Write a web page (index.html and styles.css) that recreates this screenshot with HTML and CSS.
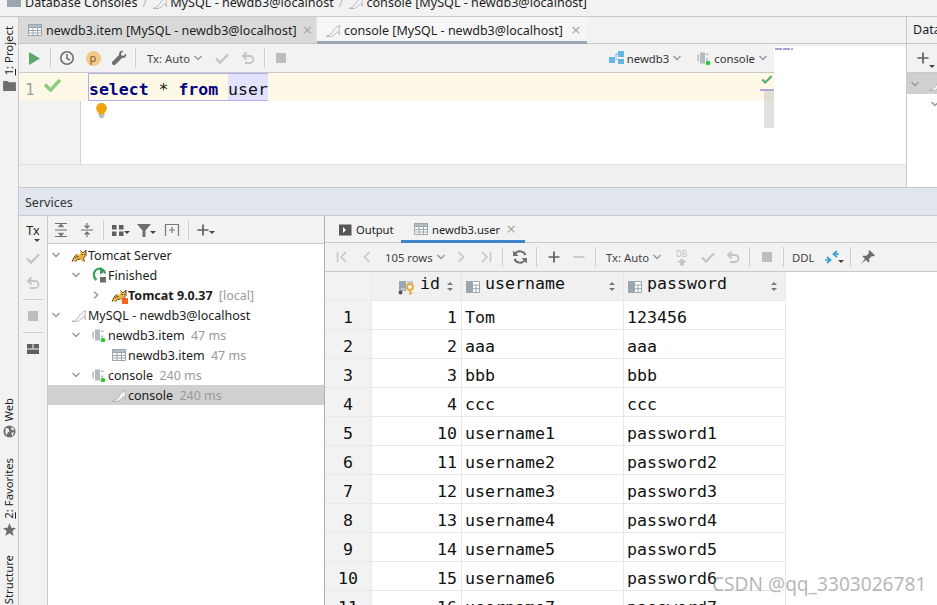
FILE: index.html
```html
<!DOCTYPE html>
<html lang="en">
<head>
<meta charset="utf-8">
<title>Database Consoles</title>
<link rel="stylesheet" href="styles.css">
</head>
<body>
<svg class="defs" width="0" height="0">
  <symbol id="dolphin" viewBox="0 0 16 16"><path d="M1 14.500C4 13.500 6.500 12 8 9.500 9.500 6.500 11.500 4.500 15 3.500L14 6.500 14.500 12.500 12.500 9.500C11 11.500 9 13.500 6 14.500Z" fill="#f6f6f6" stroke="#ababab" stroke-width=".8"/></symbol>
  <symbol id="table" viewBox="0 0 14 14"><path d="M.5 1.500h13v11H.5z" fill="#fff" stroke="#9aa7b0"/><path d="M.5 1.500h13v3H.5z" fill="#b3bcc3" stroke="#9aa7b0"/><path d="M.5 7.500h13M.5 10h13M5 4.500v8M9.500 4.500v8" stroke="#9aa7b0" fill="none"/></symbol>
  <symbol id="col" viewBox="0 0 14 14"><path d="M0 1h6v12H0z" fill="#9aa7b0"/><path d="M6.500 1.500h7v11h-7zM6.500 5h7M6.500 8.700h7M10 5v7.500" fill="#fff" stroke="#9aa7b0"/></symbol>
  <symbol id="chev" viewBox="0 0 10 10"><path d="M1.500 3l3.500 3.500L8.500 3" fill="none" stroke="#9a9a9a" stroke-width="1.500"/></symbol>
  <symbol id="chevr" viewBox="0 0 10 10"><path d="M3 1.500L6.500 5 3 8.500" fill="none" stroke="#9a9a9a" stroke-width="1.500"/></symbol>
  <symbol id="check" viewBox="0 0 16 16"><path d="M2 8.500l4 4 8-8" fill="none" stroke="#c4c4c4" stroke-width="2.400"/></symbol>
  <symbol id="undo" viewBox="0 0 16 16"><path d="M3.500 6H10a3.500 3.500 0 0 1 0 7H5M6.500 2.500L3 6l3.500 3.500" fill="none" stroke="#c4c4c4" stroke-width="1.800"/></symbol>
  <symbol id="stop" viewBox="0 0 16 16"><path d="M3 3h10v10H3z" fill="#bdbdbd"/></symbol>
  <symbol id="conn" viewBox="0 0 16 16"><path d="M1.500 4.500h1.500v7H1.500zM4 2.500h5v11H4z" fill="#b4bbc0"/><path d="M10 3.500h2.500v1.500H10zM10 8.500h2v2h-2z" fill="#b4bbc0"/><circle cx="12" cy="13" r="2.300" fill="#2fc62f"/></symbol>
  <symbol id="cat" viewBox="0 0 16 16"><path d="M1 14.500C2.500 12 3 9 6 7.500L9 7.500 9.500 3.500 11.500 5.500 13.500 5 15 3 15 8.500 12.500 11 13.500 14.500H11L9.500 12 6.500 12.500 4.500 14.500Z" fill="#edb53a"/><path d="M1 14.500C2.500 12 3 9 6 7.500M9.500 3.500L11.500 5.500 13.500 5 15 3 15 8.500 12.500 11 13.500 14.500M9.500 12L6.500 12.500 4.500 14.500" fill="none" stroke="#4f4a3e" stroke-width="1"/><path d="M10.500 7.500h1.500M13 7.500h1M4.500 10.500L7.500 9.500" stroke="#4f4a3e" stroke-width="1"/></symbol>
  <symbol id="plus" viewBox="0 0 16 16"><path d="M8 2.500v11M2.500 8h11" stroke="#5f5f5f" stroke-width="1.700"/></symbol>
  <symbol id="caret" viewBox="0 0 6 4"><path d="M0 0h6L3 3z" fill="#444"/></symbol>
</svg>

<div class="app">
  <div class="crumbs">
    <span class="crumb-box"></span><span class="crumb">Database Consoles</span><span class="slash">/</span>
    <svg class="i16"><use href="#dolphin"/></svg><span class="crumb">MySQL - newdb3@localhost</span><span class="slash">/</span>
    <svg class="i16"><use href="#dolphin"/></svg><span class="crumb">console [MySQL - newdb3@localhost]</span>
  </div>

  <div class="main">
    <div class="stripe">
      <span class="vt vt-project"><u>1</u>: Project</span>
      <svg class="stripe-ico folder" viewBox="0 0 14 12"><path d="M0 1h5l1.500 1.500H14V12H0z" fill="#6e6e6e"/></svg>
      <span class="vt vt-web">Web</span>
      <svg class="stripe-ico globe" viewBox="0 0 14 14"><circle cx="7" cy="7" r="6.500" fill="#6e6e6e"/><path d="M3 3l3 1 1 3-2 1-1 3-1.500-3zM9 2l3 2-1 2-2-1zM9 8l3 0-2 4z" fill="#f2f2f2"/></svg>
      <span class="vt vt-fav"><u>2</u>: Favorites</span>
      <svg class="stripe-ico star" viewBox="0 0 14 14"><path d="M7 0l2 5 5 .3-3.900 3.200L11.400 14 7 11l-4.400 3 1.300-5.500L0 5.300 5 5z" fill="#6e6e6e"/></svg>
      <span class="vt vt-struct">Structure</span>
    </div>

    <div class="center">
      <div class="upper">
        <div class="upper-main">
          <div class="tabs">
            <div class="tab tab-off"><svg class="i14"><use href="#table"/></svg><span>newdb3.item [MySQL - newdb3@localhost]</span><span class="x">×</span></div>
            <div class="tab tab-on"><svg class="i16"><use href="#dolphin"/></svg><span>console [MySQL - newdb3@localhost]</span><span class="x">×</span></div>
          </div>
          <div class="work">
            <div class="work-left">
              <div class="ed-bar">
                <span class="eb"><svg class="i16" viewBox="0 0 16 16"><path d="M3 2l11 6.500L3 15z" fill="#59a869"/></svg></span>
                <span class="sep"></span>
                <span class="eb"><svg class="i16" viewBox="0 0 16 16"><circle cx="8" cy="8" r="6.200" fill="none" stroke="#6e6e6e" stroke-width="1.600"/><path d="M8 4v4.500l3 1.500" fill="none" stroke="#6e6e6e" stroke-width="1.500"/></svg></span>
                <span class="eb"><span class="pbadge">p</span></span>
                <span class="eb"><svg class="i16" viewBox="0 0 16 16"><path d="M15 3.500l-2.500 2.500-2-.5-.5-2L12.500 1C10 .2 7.500 2 8 5L1.500 11.500a2 2 0 0 0 3 3L11 8c3 .5 4.800-2 4-4.500z" fill="#6e6e6e"/></svg></span>
                <span class="sep"></span>
                <span class="lbl lbl-tx1">Tx: Auto<svg class="chev"><use href="#chev"/></svg></span>
                <span class="eb"><svg class="i16"><use href="#check"/></svg></span>
                <span class="eb"><svg class="i16"><use href="#undo"/></svg></span>
                <span class="sep"></span>
                <span class="eb"><svg class="i16"><use href="#stop"/></svg></span>
                <span class="ed-right">
                  <svg class="i16" viewBox="0 0 16 16"><path d="M0 7h6v6H0zM9 1h6v6H9zM9 9h6v5H9z" fill="#62b8e0"/><path d="M6 9h3M9 4H7v3" stroke="#62b8e0" fill="none"/></svg>
                  <span class="ctx">newdb3</span><svg class="chev"><use href="#chev"/></svg>
                  <svg class="i16 ctx-gap"><use href="#conn"/></svg>
                  <span class="ctx">console</span><svg class="chev"><use href="#chev"/></svg>
                </span>
              </div>
              <div class="editor">
                <div class="line">
                  <div class="line-gut"><span class="lnum">1</span><svg class="okmark" viewBox="0 0 20 16"><path d="M2 8l6 6L18 3" fill="none" stroke="#8ccb7e" stroke-width="3.600"/></svg></div>
                  <div class="code"><span class="kw">select</span> * <span class="kw">from</span> <span class="ident">user</span></div>
                </div>
                <div class="rest">
                  <div class="rest-gut"></div>
                  <div class="rest-body"><svg class="bulb" viewBox="0 0 11 15"><path d="M5.500 0a5.200 5.200 0 0 1 3 9.500V11h-6V9.500A5.200 5.200 0 0 1 5.500 0z" fill="#f0a30a"/><path d="M2.500 12h6M3.500 14h4" stroke="#777" stroke-width="1"/></svg></div>
                </div>
                <svg class="mini-ok" viewBox="0 0 14 12"><path d="M1.500 6l3.500 3.500L12.500 2" fill="none" stroke="#59a869" stroke-width="2.400"/></svg>
                <span class="mark-line"></span>
                <span class="thumb"></span>
              </div>
            </div>
            <div class="work-blank"><span class="dash"></span></div>
          </div>
          <div class="strip"></div>
        </div>
        <div class="right-panel">
          <div class="rp-tab">Data</div>
          <div class="rp-bar"><svg class="i16"><use href="#plus"/></svg><svg class="caret"><use href="#caret"/></svg></div>
          <div class="rp-sel"><svg class="chev"><use href="#chev"/></svg><svg class="i16"><use href="#dolphin"/></svg></div>
          <div class="rp-row"><svg class="chev"><use href="#chev"/></svg></div>
        </div>
      </div>

      <div class="svc-head">Services</div>

      <div class="bottom">
        <div class="tx-col">
          <span class="tx">Tx<svg class="caret"><use href="#caret"/></svg></span>
          <svg class="i16"><use href="#check"/></svg>
          <svg class="i16"><use href="#undo"/></svg>
          <span class="hsep"></span>
          <svg class="i16"><use href="#stop"/></svg>
          <span class="hsep"></span>
          <svg class="i14" viewBox="0 0 14 14"><path d="M1 2h5.500v4.500H1zM7.500 2H13v4.500H7.500zM1 7.500h12V12H1z" fill="#5f5f5f"/></svg>
        </div>

        <div class="tree-pane">
          <div class="tree-bar">
            <span class="tb"><svg class="i16" viewBox="0 0 16 16"><path d="M2 1.500h12M2 14.500h12M2 8h12M8 2.500v3M5.500 5L8 2.500 10.500 5M8 13.500v-3M5.500 11L8 13.500 10.500 11" stroke="#6e6e6e" fill="none" stroke-width="1.200"/></svg></span>
            <span class="tb"><svg class="i16" viewBox="0 0 16 16"><path d="M2 8h12M8 1v5M5.500 3.500L8 6l2.500-2.500M8 15v-5M5.500 12.500L8 10l2.500 2.500" stroke="#6e6e6e" fill="none" stroke-width="1.200"/></svg></span>
            <span class="sep"></span>
            <span class="tb"><svg class="i16" viewBox="0 0 16 16"><path d="M2 3h4.500v4.500H2zM9 3h4.500v4.500H9zM2 9.500h4.500V14H2zM9 9.500h4.500V14H9z" fill="#5f5f5f"/></svg><svg class="caret"><use href="#caret"/></svg></span>
            <span class="tb"><svg class="i16" viewBox="0 0 16 16"><path d="M1 2h14L9.500 8.500V15h-3V8.500z" fill="#6e6e6e"/></svg><svg class="caret"><use href="#caret"/></svg></span>
            <span class="tb"><svg class="i16" viewBox="0 0 16 16"><path d="M1.500 14V2.500h13V14M8 5v6M5 8h6" fill="none" stroke="#777" stroke-width="1.200"/></svg></span>
            <span class="sep"></span>
            <span class="tb"><svg class="i16"><use href="#plus"/></svg><svg class="caret"><use href="#caret"/></svg></span>
          </div>
          <div class="tree">
            <div class="node l0"><svg class="chev tc"><use href="#chev"/></svg><svg class="i16"><use href="#cat"/></svg><span class="nt">Tomcat Server</span></div>
            <div class="node l1"><svg class="chev tc"><use href="#chev"/></svg><svg class="i16" viewBox="0 0 16 16"><path d="M14 6.500A5.500 5.500 0 0 0 3 8c0 2.500 1 4 2.500 5" fill="none" stroke="#3c9a5f" stroke-width="2.200"/><path d="M9 .5l5.500 3.500L9 7.500z" fill="#3c9a5f"/><path d="M9 10h6v5.500H9z" fill="#6e6e6e"/></svg><span class="nt">Finished</span></div>
            <div class="node l2"><svg class="chev tc"><use href="#chevr"/></svg><span class="ico-wrap"><svg class="i16"><use href="#cat"/></svg><span class="badge-run"></span></span><span class="nt"><b>Tomcat 9.0.37</b> <span class="dim">[local]</span></span></div>
            <div class="node l0"><svg class="chev tc"><use href="#chev"/></svg><svg class="i16"><use href="#dolphin"/></svg><span class="nt">MySQL - newdb3@localhost</span></div>
            <div class="node l1"><svg class="chev tc"><use href="#chev"/></svg><svg class="i16"><use href="#conn"/></svg><span class="nt">newdb3.item <span class="dim">47 ms</span></span></div>
            <div class="node l2"><span class="tc"></span><svg class="i16 tbl-ico"><use href="#table"/></svg><span class="nt">newdb3.item <span class="dim">47 ms</span></span></div>
            <div class="node l1"><svg class="chev tc"><use href="#chev"/></svg><svg class="i16"><use href="#conn"/></svg><span class="nt">console <span class="dim">240 ms</span></span></div>
            <div class="node l2 sel"><span class="tc"></span><svg class="i16"><use href="#dolphin"/></svg><span class="nt">console <span class="dim">240 ms</span></span></div>
          </div>
        </div>

        <div class="results">
          <div class="res-tabs">
            <div class="rt"><svg class="i14" viewBox="0 0 14 14"><path d="M1 1.500h12.500v11H1z" fill="#555"/><path d="M5 4l3 3-3 3z" fill="#fff"/></svg><span>Output</span></div>
            <div class="rt rt-on"><svg class="i14"><use href="#table"/></svg><span>newdb3.user</span><span class="x">×</span></div>
          </div>
          <div class="res-bar">
            <span class="tb25"><svg class="i16" viewBox="0 0 16 16"><path d="M3.500 3v10M12 3L7 8l5 5" fill="none" stroke="#c4c4c4" stroke-width="1.500"/></svg></span>
            <span class="tb25"><svg class="i16" viewBox="0 0 16 16"><path d="M10.500 3l-5 5 5 5" fill="none" stroke="#c4c4c4" stroke-width="1.500"/></svg></span>
            <span class="lbl lbl-rows">105 rows<svg class="chev"><use href="#chev"/></svg></span>
            <span class="tb25"><svg class="i16" viewBox="0 0 16 16"><path d="M5.500 3l5 5-5 5" fill="none" stroke="#c4c4c4" stroke-width="1.500"/></svg></span>
            <span class="tb25"><svg class="i16" viewBox="0 0 16 16"><path d="M12.500 3v10M4 3l5 5-5 5" fill="none" stroke="#c4c4c4" stroke-width="1.500"/></svg></span>
            <span class="sep"></span>
            <span class="tb25"><svg class="i16" viewBox="0 0 16 16"><path d="M13.500 6A6 6 0 0 0 3 5M2.500 10A6 6 0 0 0 13 11" fill="none" stroke="#6e6e6e" stroke-width="2"/><path d="M1 1.500V7h5.500zM15 14.500V9H9.500z" fill="#6e6e6e"/></svg></span>
            <span class="sep"></span>
            <span class="tb25"><svg class="i16"><use href="#plus"/></svg></span>
            <span class="tb25"><svg class="i16" viewBox="0 0 16 16"><path d="M2.500 8h11" stroke="#c4c4c4" stroke-width="1.700"/></svg></span>
            <span class="sep"></span>
            <span class="lbl lbl-tx2">Tx: Auto<svg class="chev"><use href="#chev"/></svg></span>
            <span class="tb25"><span class="dbup"><span class="dbt">DB</span><svg class="dba" viewBox="0 0 12 7"><path d="M6 0l5 4H8v3H4V4H1z" fill="#c4c4c4"/></svg></span></span>
            <span class="tb25 m1"><svg class="i16"><use href="#check"/></svg></span>
            <span class="tb25"><svg class="i16"><use href="#undo"/></svg></span>
            <span class="sep"></span>
            <span class="tb25"><svg class="i16"><use href="#stop"/></svg></span>
            <span class="sep"></span>
            <span class="lbl lbl-ddl">DDL</span>
            <span class="tb25"><svg class="i16" viewBox="0 0 16 16"><path d="M15 5H10.500M13 2L9.500 5 13 8M1 11h4.500M3 8l3.500 3L3 14" fill="none" stroke="#389fd6" stroke-width="1.700"/></svg><svg class="caret"><use href="#caret"/></svg></span>
            <span class="sep"></span>
            <span class="tb25"><svg class="i16" viewBox="0 0 16 16"><path d="M9.500 1L15 6.500l-1.500 1L12 7 9 10l.5 2.500-1 1L6 11l-5 4 4-5-2.500-2.500 1-1L6 7l3-3-.5-1.500z" fill="#6e6e6e"/></svg></span>
          </div>
          <div class="grid">
            <div class="row head">
              <div class="c n"></div>
              <div class="c h h-id"><svg class="pk" viewBox="0 0 17 16"><path d="M1 2h7v10H1z" fill="#9aa7b0"/><path d="M3 9h4v2H3zM9 2h6v3H9z" fill="#c3cbd0"/><circle cx="2.500" cy="13.500" r="2" fill="#555"/><circle cx="12" cy="8" r="3" fill="none" stroke="#e9a83a" stroke-width="1.800"/><path d="M12 11v5M12 14h2.500" stroke="#e9a83a" stroke-width="1.500"/></svg><span class="ht">id</span><span class="sort"></span></div>
              <div class="c h"><svg class="i14"><use href="#col"/></svg><span class="ht">username</span><span class="sort"></span></div>
              <div class="c h"><svg class="i14"><use href="#col"/></svg><span class="ht">password</span><span class="sort"></span></div>
            </div>
            <div class="row"><div class="c n">1</div><div class="c num">1</div><div class="c">Tom</div><div class="c">123456</div></div>
            <div class="row"><div class="c n">2</div><div class="c num">2</div><div class="c">aaa</div><div class="c">aaa</div></div>
            <div class="row"><div class="c n">3</div><div class="c num">3</div><div class="c">bbb</div><div class="c">bbb</div></div>
            <div class="row"><div class="c n">4</div><div class="c num">4</div><div class="c">ccc</div><div class="c">ccc</div></div>
            <div class="row"><div class="c n">5</div><div class="c num">10</div><div class="c">username1</div><div class="c">password1</div></div>
            <div class="row"><div class="c n">6</div><div class="c num">11</div><div class="c">username2</div><div class="c">password2</div></div>
            <div class="row"><div class="c n">7</div><div class="c num">12</div><div class="c">username3</div><div class="c">password3</div></div>
            <div class="row"><div class="c n">8</div><div class="c num">13</div><div class="c">username4</div><div class="c">password4</div></div>
            <div class="row"><div class="c n">9</div><div class="c num">14</div><div class="c">username5</div><div class="c">password5</div></div>
            <div class="row"><div class="c n">10</div><div class="c num">15</div><div class="c">username6</div><div class="c">password6</div></div>
            <div class="row"><div class="c n">11</div><div class="c num">16</div><div class="c">username7</div><div class="c">password7</div></div>
          </div>
        </div>
      </div>
    </div>
  </div>
  <div class="watermark">CSDN @qq_3303026781</div>
</div>
</body>
</html>
```

FILE: styles.css
```css
* { box-sizing: border-box; }
html, body { margin: 0; height: 605px; overflow: hidden; }
body { font-family: "Noto Sans", "Open Sans", sans-serif; font-size: 12.5px; color: #1f1f1f; background: #f2f2f2; }
.defs { position: absolute; }
svg { display: block; flex: none; }
.i16 { width: 16px; height: 16px; }
.i14 { width: 14px; height: 14px; }
.chev { width: 10px; height: 10px; }
.caret { width: 6px; height: 4px; align-self: flex-end; margin-left: -2px; margin-bottom: 3px; }

.app { position: relative; width: 937px; height: 605px; display: flex; flex-direction: column; overflow: hidden; }

/* breadcrumb */
.crumbs { height: 17px; flex: none; border-bottom: 1px solid #c9c9c9; display: flex; align-items: flex-start; padding-left: 7px; overflow: hidden; font-size: 12.600px; }
.crumbs > * { margin-top: -6px; }
.crumbs .i16 { margin-top: -6px; }
.crumb-box { width: 14px; height: 13px; background: #9aa7b0; margin-right: 2px; }
.crumb { line-height: 18px; white-space: nowrap; margin-left: 2px; }
.slash { color: #bbb; line-height: 18px; margin: -6px 5px 0 5px; }

/* left stripe */
.main { flex: 1; display: flex; min-height: 0; }
.stripe { width: 19px; flex: none; border-right: 1px solid #c9c9c9; display: flex; flex-direction: column; align-items: center; padding-top: 9px; background: #f2f2f2; }
.vt { writing-mode: vertical-rl; transform: rotate(180deg); font-size: 11.300px; line-height: 18px; white-space: nowrap; color: #222; }
.stripe-ico { flex: none; }
.folder { width: 13px; height: 11px; margin-top: 5px; }
.vt-web { margin-top: auto; }
.globe { width: 13px; height: 13px; margin-top: 4px; }
.vt-fav { margin-top: 20px; }
.star { width: 13px; height: 13px; margin-top: 4px; }
.vt-struct { margin-top: 19px; margin-bottom: 1px; }

/* upper area */
.center { flex: 1; min-width: 0; display: flex; flex-direction: column; }
.upper { height: 171px; flex: none; display: flex; border-bottom: 1px solid #c9c9c9; }
.upper-main { width: 887px; flex: none; display: flex; flex-direction: column; }
.tabs { height: 27px; flex: none; display: flex; background: #f2f2f2; border-bottom: 1px solid #c9c9c9; }
.tab { display: flex; align-items: center; height: 27px; white-space: nowrap; }
.tab-off { width: 298px; background: #d9d9d9; padding-left: 9px; gap: 4px; height: 26px; border-right: 1px solid #e5e5e5; }
.tab-off .x { margin-left: 2px; }
.tab-on { width: 270px; background: #f6f6f6; padding-left: 8px; gap: 3px; border-bottom: 3px solid #9aa5b5; padding-top: 2px; }
.x { color: #aaa; font-size: 17px; line-height: 14px; margin-left: 5px; }
.work { height: 120px; flex: none; display: flex; }
.work-left { width: 755px; flex: none; display: flex; flex-direction: column; }
.work-blank { flex: 1; background: #fff; margin-top: 3px; position: relative; }
.dash { position: absolute; left: 1px; top: 1px; width: 18px; height: 2px; background: repeating-linear-gradient(90deg, #a9a3d6 0 7px, #fff 7px 8px); }
.ed-bar { height: 29px; flex: none; display: flex; align-items: center; padding-left: 2px; background: #f2f2f2; border-bottom: 1px solid #c9c9c9; }
.eb { width: 26px; height: 20px; display: flex; align-items: center; justify-content: center; flex: none; }
.sep { width: 1px; height: 20px; background: #cfcfcf; margin: 0 4px; flex: none; }
.ed-bar .sep { margin: 0 3px; }
.pbadge { width: 15px; height: 15px; border-radius: 50%; background: #f4c987; color: #7a5a2a; font-size: 11px; line-height: 14px; text-align: center; }
.lbl { display: flex; align-items: center; white-space: nowrap; flex: none; font-size: 11.300px; color: #444; }
.lbl .chev { margin-left: 3px; }
.lbl-tx1 { width: 70px; padding-left: 8px; }
.ed-right { margin-left: auto; display: flex; align-items: center; padding-right: 6px; }
.ctx { margin-left: 2px; font-size: 11.300px; color: #333; }
.ed-right .chev { margin-left: 3px; }
.ed-right .ctx-gap { margin-left: 14px; }
.editor { flex: 1; position: relative; display: flex; flex-direction: column; background: #fff; }
.line { height: 28px; flex: none; display: flex; background: #fef9e6; }
.line-gut { width: 62px; flex: none; display: flex; align-items: center; padding-left: 6px; }
.lnum { font-family: "DejaVu Sans Mono", monospace; font-size: 16px; color: #a0a0a0; width: 18px; margin-top: 4px; }
.okmark { width: 19px; height: 15px; margin-top: -5px; }
.code { margin-left: 7px; height: 28px; width: 180px; border: 1px solid #b4aaf0; font-family: "DejaVu Sans Mono", monospace; font-size: 16.500px; line-height: 32px; white-space: pre; color: #111; }
.kw { font-weight: bold; color: #000080; }
.ident { display: inline-block; height: 26px; vertical-align: top; background: #e2e2ff; }
.rest { flex: 1; display: flex; }
.rest-gut { width: 62px; flex: none; background: #f2f2f2; border-right: 1px solid #d4d4d4; }
.rest-body { flex: 1; background: #fff; }
.bulb { width: 11px; height: 15px; margin: 2px 0 0 15px; }
.mini-ok { position: absolute; left: 742px; top: 1px; width: 12px; height: 11px; }
.mark-line { position: absolute; left: 741px; top: 16px; width: 14px; height: 2px; background: #b3a4e6; }
.thumb { position: absolute; left: 745px; top: 18px; width: 10px; height: 37px; background: rgba(180,180,180,.4); }
.strip { flex: 1; background: #f0f0f0; border-top: 1px solid #e0e0e0; }
.right-panel { flex: 1; border-left: 1px solid #c9c9c9; display: flex; flex-direction: column; background: #fff; min-width: 0; overflow: hidden; }
.rp-tab { height: 27px; flex: none; background: #f2f2f2; border-bottom: 1px solid #c9c9c9; padding-left: 6px; line-height: 26px; white-space: nowrap; }
.rp-bar { height: 29px; flex: none; background: #f2f2f2; border-bottom: 1px solid #c9c9c9; display: flex; align-items: center; padding-left: 8px; }
.rp-sel { height: 21px; flex: none; background: #d0d0d0; display: flex; align-items: center; padding-left: 3px; gap: 8px; }
.rp-row { height: 20px; display: flex; align-items: center; padding-left: 23px; }

/* services */
.svc-head { height: 28px; flex: none; background: #e1e5ed; border-bottom: 1px solid #c9c9c9; padding-left: 6px; line-height: 29px; font-size: 12.500px; color: #333; }
.bottom { flex: 1; display: flex; min-height: 0; }
.tx-col { width: 29px; flex: none; border-right: 1px solid #c9c9c9; display: flex; flex-direction: column; align-items: center; padding-top: 7px; gap: 9px; background: #f2f2f2; }
.tx-col .i14 { margin-top: 1px; }
.tx { display: flex; font-size: 12.500px; line-height: 16px; height: 17px; margin-bottom: 1px; }
.tx .caret { margin-left: -6px; margin-bottom: -3px; }
.hsep { width: 20px; height: 1px; background: #cfcfcf; margin-top: -1px; margin-bottom: -1px; }
.tree-pane { width: 277px; flex: none; border-right: 1px solid #b0b0b0; display: flex; flex-direction: column; background: #fff; }
.tree-bar { height: 28px; flex: none; display: flex; align-items: center; padding-left: 0; background: #f2f2f2; border-bottom: 1px solid #c9c9c9; }
.tree-bar .sep { margin: 0 3px 0 3px; }
.tb { width: 26px; display: flex; align-items: center; justify-content: center; flex: none; }
.tree { flex: 1; padding-top: 1px; }
.node { height: 20px; display: flex; align-items: center; white-space: nowrap; color: #1c1c1c; }
.tc { width: 10px; height: 10px; margin-right: 10px; margin-left: 3px; flex: none; }
.l1 { padding-left: 20px; }
.l2 { padding-left: 40px; }
.l0 { padding-left: 0; }
.node .nt { margin-left: 1px; }
.sel { background: #d0d0d0; }
.dim { color: #9a9a9a; margin-left: 3px; }
.ico-wrap { position: relative; display: block; }
.badge-run { position: absolute; right: -1px; bottom: -1px; width: 6px; height: 6px; background: #f26522; }
.tbl-ico { padding: 1px; }

/* results */
.results { flex: 1; min-width: 0; display: flex; flex-direction: column; position: relative; background: #fff; }
.res-tabs { height: 27px; flex: none; display: flex; background: #f2f2f2; border-bottom: 1px solid #c9c9c9; }
.rt { display: flex; align-items: center; gap: 4px; padding: 0 13px; height: 27px; font-size: 11.200px; color: #222; }
.rt-on { border-bottom: 3px solid #4083c9; padding-top: 2px; padding-right: 12px; width: 124px; }
.rt-on .x { margin-left: 2px; }
.rt:first-child { width: 76px; }
.res-bar { height: 29px; flex: none; display: flex; align-items: center; padding-left: 4px; background: #f2f2f2; border-bottom: 1px solid #c9c9c9; }
.tb25 { width: 25px; display: flex; align-items: center; justify-content: center; flex: none; height: 20px; }
.m1 { margin-left: 1px; }
.lbl-rows { width: 69px; padding-left: 6px; }
.lbl-tx2 { width: 69px; padding-left: 6px; }
.lbl-ddl { width: 33px; padding-left: 4px; }
.dbup { display: flex; flex-direction: column; align-items: center; }
.dbt { font-size: 8px; line-height: 9px; color: #bdbdbd; }
.dba { width: 12px; height: 8px; }
.grid { flex: 1; font-family: "DejaVu Sans Mono", monospace; font-size: 16.600px; color: #111; overflow: hidden; }
.row { display: grid; grid-template-columns: 47px 90px 162px 162px; grid-template-rows: 29px; width: 461px; height: 29px; }
.c { height: 29px; border-right: 1px solid #e8e8e8; border-bottom: 1px solid #e8e8e8; padding: 0 3px; line-height: 33px; white-space: nowrap; overflow: visible; }
.n { background: #f2f2f2; text-align: center; padding: 0; border-right: 1px solid #e8e8e8; }
.num { text-align: right; padding-right: 4px; }
.h { background: #f0f0f0; display: flex; align-items: flex-start; padding: 0 4px; position: relative; }
.h .i14 { margin-top: 8px; }
.h-id { justify-content: flex-start; padding-left: 26px; }
.pk { width: 17px; height: 16px; margin-top: 7px; }
.ht { margin-left: 5px; line-height: 23px; }
.sort { position: absolute; right: 8px; top: 10px; width: 6px; height: 9px; }
.sort::before, .sort::after { content: ""; position: absolute; left: 0; border-left: 3px solid transparent; border-right: 3px solid transparent; }
.sort::before { top: 0; border-bottom: 3px solid #777; }
.sort::after { bottom: 0; border-top: 3px solid #777; }
.watermark { position: absolute; left: 712px; top: 572px; font-size: 19.100px; line-height: 24px; color: rgba(120,120,120,.55); white-space: nowrap; font-family: "Noto Sans", sans-serif; }
```
